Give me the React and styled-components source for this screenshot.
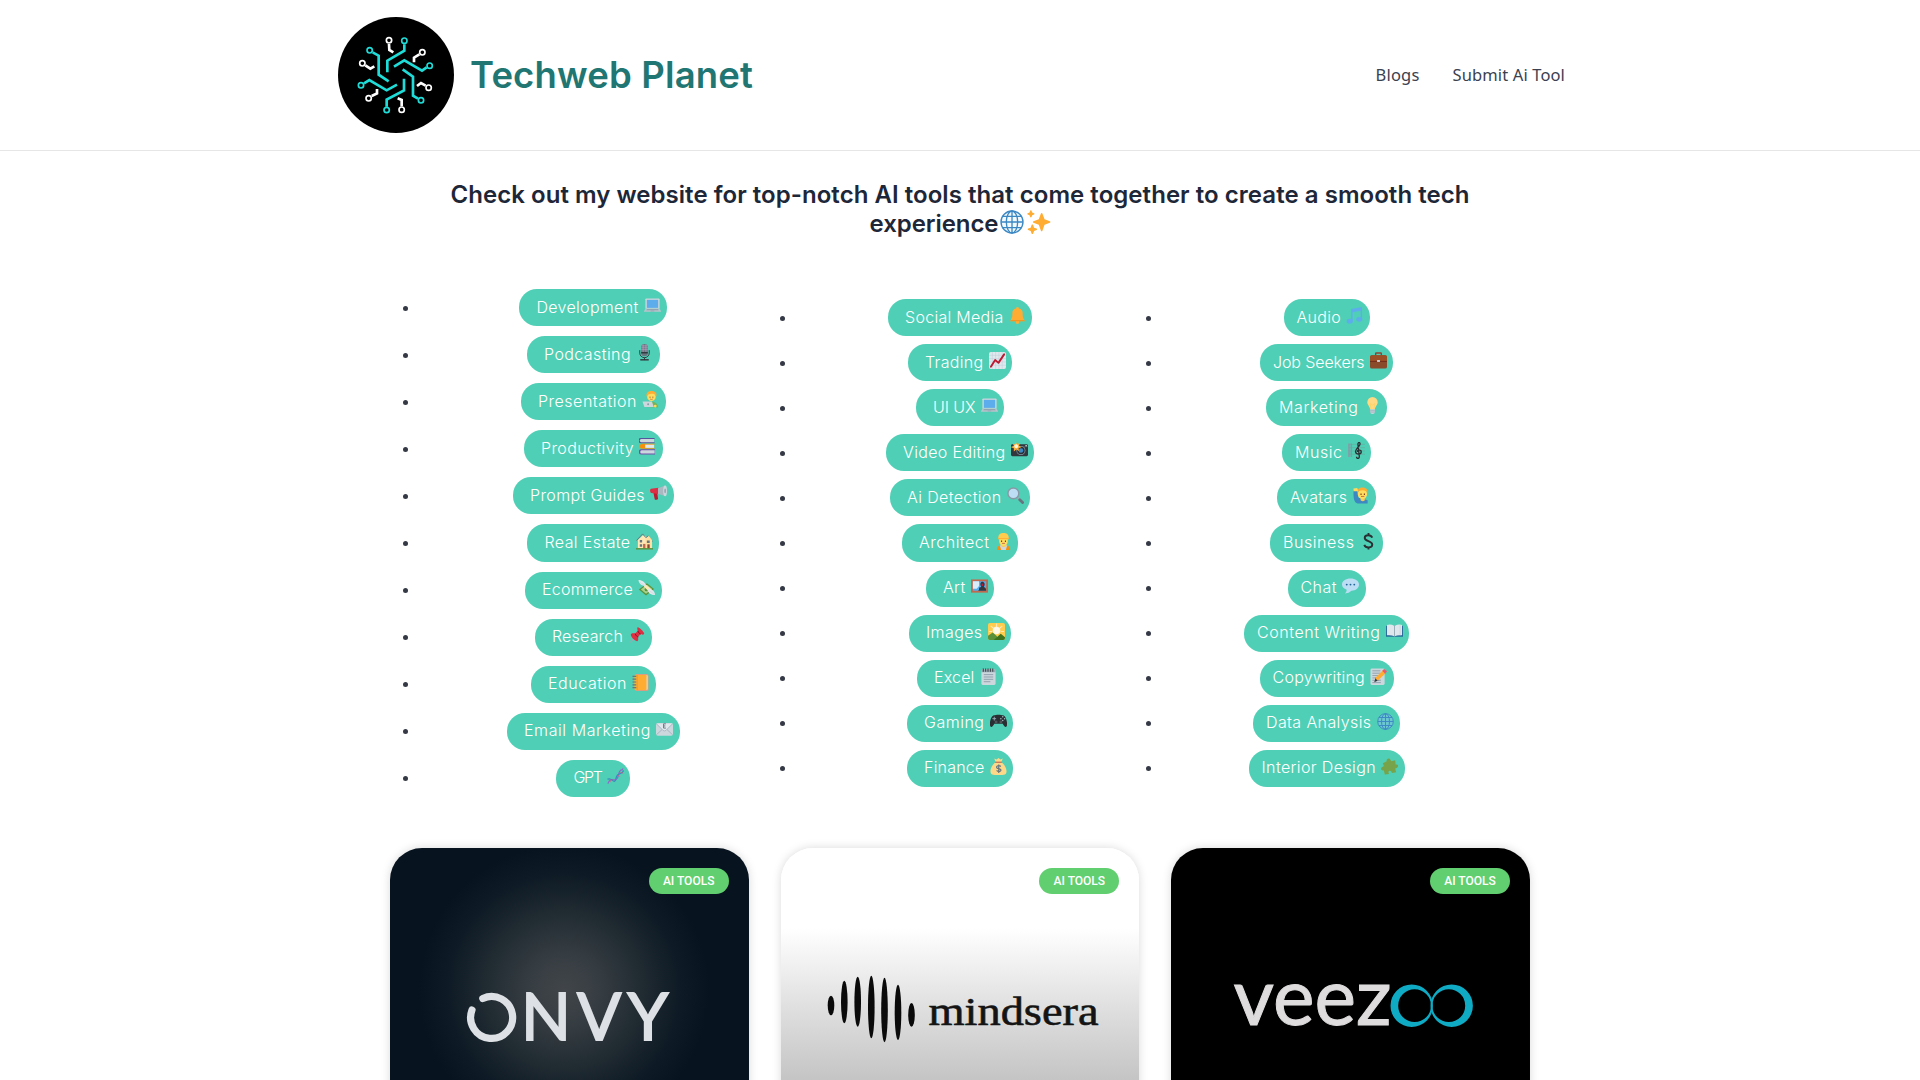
import React, { useLayoutEffect, useRef, useState } from "react";
import styled, { createGlobalStyle } from "styled-components";

const GlobalStyle = createGlobalStyle`
  * { box-sizing: border-box; }
  body { margin: 0; background: #fff; font-family: Inter, "Liberation Sans", sans-serif; overflow: hidden; }
`;

const Page = styled.div`
  height: 1080px;
  overflow: hidden;
  display: flex;
  flex-direction: column;
  background: #fff;
`;

const Header = styled.header`
  flex: none;
  height: 151px;
  border-bottom: 1px solid #e6e6e6;
  display: flex;
  justify-content: center;
`;

const HeaderInner = styled.div`
  width: 1244px;
  display: flex;
  align-items: center;
  justify-content: space-between;
  padding-right: 17px;
`;

const Brand = styled.a`
  display: flex;
  align-items: center;
  gap: 16px;
`;

const BrandMark = styled.svg`
  width: 116px;
  height: 116px;
  display: block;
`;

const BrandName = styled.span`
  font-size: 36.5px;
  font-weight: 600;
  line-height: 44px;
  color: #1f7672;
`;

const Nav = styled.nav`
  display: flex;
  gap: 33px;
`;

const NavLink = styled.a`
  font-family: "Noto Sans", "Open Sans", sans-serif;
  font-size: 16.5px;
  line-height: 24px;
  color: #3a4150;
`;

const Heading = styled.h2`
  flex: none;
  margin: 29px 0 0;
  display: flex;
  flex-direction: column;
  align-items: center;
  font-size: 24px;
  font-weight: 600;
  line-height: 29px;
  color: #1e2738;
`;

const HeadingLine = styled.div`
  display: flex;
  height: 29px;
  align-items: center;
`;

const HeadingIcons = styled.span`
  display: flex;
  gap: 3px;
  margin-left: 1px;
  padding-bottom: 3px;
`;

const Columns = styled.div`
  flex: none;
  height: 508px;
  margin: 51px 0 0 403px;
  display: grid;
  grid-template-columns: 377px 366px 356px;
  align-items: center;
`;

const List = styled.ul`
  list-style: none;
  margin: 0;
  padding: 0;
  width: ${(p) => p.$width}px;
  display: flex;
  flex-direction: column;
  gap: ${(p) => p.$gap}px;
`;

const Item = styled.li`
  display: flex;
  align-items: center;
`;

const Bullet = styled.span`
  flex: none;
  width: 5px;
  height: 5px;
  margin-top: 1px;
  border-radius: 50%;
  background: #343945;
`;

const Slot = styled.div`
  flex: 1;
  display: flex;
  justify-content: center;
`;

const Pill = styled.a`
  width: ${(p) => p.$width}px;
  height: 37.1px;
  padding: 0 6.5px 0 ${(p) => p.$indent}px;
  border-radius: 18px;
  background: #4fcfb5;
  color: #fff;
  display: flex;
  align-items: center;
  justify-content: space-between;
  font-size: 16px;
  font-weight: 300;
  line-height: 27px;
`;

const Label = styled.span`
  white-space: nowrap;
  margin-bottom: 1px;
`;

const Emoji = styled.svg`
  flex: none;
  display: block;
  width: ${(p) => p.$size || 17}px;
  height: ${(p) => p.$size || 17}px;
  margin-bottom: ${(p) => (p.$size ? 0 : 4)}px;
`;

const Cards = styled.div`
  flex: none;
  width: 1140px;
  margin: 51px auto 0;
  display: grid;
  grid-template-columns: repeat(3, 1fr);
  gap: 32px;
`;

const Card = styled.article`
  position: relative;
  height: 520px;
  border-radius: 32px;
  overflow: hidden;
  background: #fff;
  box-shadow: 0 0 10px rgba(0, 0, 0, 0.15);
`;

const Badge = styled.span`
  position: absolute;
  top: 20px;
  right: 20px;
  width: 80px;
  height: 26px;
  border-radius: 13px;
  background: #61ce70;
  color: #fff;
  font-family: Roboto, sans-serif;
  font-size: 12px;
  font-weight: 500;
  line-height: 26px;
  text-align: center;
`;

const Art = styled.svg`
  display: block;
  width: 100%;
  height: 520px;
`;

/* Spreads the letters of a text over a given width. */
function Fit({ as: Tag = Label, width, children }) {
  const ref = useRef(null);
  const [spacing, setSpacing] = useState(0);
  useLayoutEffect(() => {
    const natural = ref.current.getBoundingClientRect().width;
    setSpacing((width - natural) / children.length);
  }, [width, children]);
  return (
    <Tag ref={ref} style={{ letterSpacing: `${spacing}px`, whiteSpace: "nowrap" }}>
      {children}
    </Tag>
  );
}

const globe = (
  <g fill="none" stroke="#3b88c3" strokeWidth="2">
    <circle cx="18" cy="18" r="16.5" fill="#d5ecfa" fillOpacity=".25" />
    <ellipse cx="18" cy="18" rx="8.5" ry="16.5" />
    <path d="M18 1v34M1.5 18h33M4 9.5h28M4 26.5h28" />
  </g>
);

const icons = {
  globe,
  globeSolid: <g><circle cx="18" cy="18" r="16" fill="#3b94d9" fillOpacity=".35" />{globe}</g>,
  sparkles: (
    <g fill="#ffac33">
      <path d="M34.3 16.9l-8-3-3.2-8.7c-.4-1-1.8-1-2.2 0l-3.2 8.7-8 3c-1 .4-1 1.8 0 2.2l8 3 3.2 8.9c.4 1 1.8 1 2.2 0l3.2-8.9 8-3c1-.4 1-1.8 0-2.2z" />
      <path d="M14.3 27.9l-3.7-1.4L9.2 22.500c-.4-1-1.900-1-2.300 0L5.500 26.500l-3.700 1.400c-1 .4-1 1.800 0 2.200l3.700 1.400 1.400 3.900c.4 1 1.900 1 2.300 0l1.400-3.900 3.700-1.400c1-.4 1-1.800 0-2.200zM10.500 4.800L7.800 3.800 6.800 1.100c-.3-.9-1.700-.9-2 0l-1 2.700-2.700 1c-.9.300-.9 1.700 0 2l2.700 1 1 2.700c.3.900 1.700.900 2 0l1-2.700 2.700-1c.9-.3.9-1.700 0-2z" />
    </g>
  ),
  laptop: (
    <g>
      <path d="M5 3h26a2 2 0 0 1 2 2v20H3V5a2 2 0 0 1 2-2z" fill="#ccd6dd" />
      <path d="M6 6h24v17H6z" fill="#5dadec" />
      <path d="M3 25h30l3 5v1H0v-1z" fill="#b8c5cd" />
      <path d="M6 26h24l1 2H5zM14 29h8v1h-8z" fill="#8899a6" />
    </g>
  ),
  mic: (
    <g>
      <path d="M8 13v6a10 10 0 0 0 20 0v-6M18 29v5" fill="none" stroke="#31373d" strokeWidth="2" />
      <rect x="11" y="0" width="14" height="26" rx="7" fill="#66757f" />
      <path d="M12 4h12M11 8h14M11 12h14M15 1v16M21 1v16" stroke="#bb9abf" strokeWidth="1.500" />
      <path d="M11 17h14v3H11z" fill="#31373d" />
      <path d="M9 32h18v3H9z" fill="#31373d" />
    </g>
  ),
  technologist: (
    <g>
      <path d="M9 34c0-8 4-11 11-11s13 3 14 12z" fill="#77b255" />
      <circle cx="20" cy="12" r="9" fill="#ffdc5d" />
      <path d="M10 12C8 3 14 0 20 0s13 3 10 12c-1-5-5-6-10-6s-9 2-10 6z" fill="#ffac33" />
      <path d="M16 12h2v2h-2zM22 12h2v2h-2z" fill="#662113" />
      <path d="M17 17q3 2 6 0" stroke="#c1694f" strokeWidth="1.500" fill="none" />
      <path d="M1 22h20l4 12H5z" fill="#ccd6dd" />
      <circle cx="13" cy="28" r="2" fill="#8899a6" />
      <circle cx="28" cy="32" r="3" fill="#ffdc5d" />
    </g>
  ),
  books: (
    <g>
      <path d="M4 0h29v2H32v7h1v2H4a5.500 5.500 0 0 1 0-11z" fill="#55559d" />
      <path d="M5 2h27v7H5a3.500 3.500 0 0 1 0-7z" fill="#ccd6dd" />
      <path d="M7 12h26v2h-1v7h1v2H7a5.500 5.500 0 0 1 0-11z" fill="#f4900c" />
      <path d="M13 14h19v7H13z" fill="#e1e8ed" />
      <path d="M5 24h29v2h-1v7h1v2H5a5.500 5.500 0 0 1 0-11z" fill="#744eaa" />
      <path d="M6 26h27v7H6a3.500 3.500 0 0 1 0-7z" fill="#ccd6dd" />
    </g>
  ),
  megaphone: (
    <g>
      <path d="M7 15l8-1 2 15c0 2-7 3-7 1z" fill="#be1931" />
      <path d="M2 8l16-2v13L3 17c-3 0-4-8-1-9z" fill="#dd2e44" />
      <path d="M17 7L32 1l2 23-17-5z" fill="#aab8c2" />
      <ellipse cx="32" cy="12.500" rx="4" ry="11.500" fill="#ccd6dd" />
      <ellipse cx="32" cy="12.500" rx="1.500" ry="5" fill="#8899a6" />
    </g>
  ),
  house: (
    <g>
      <path d="M4 15L15 4l17 10v18H4z" fill="#ffe8b6" />
      <path d="M1 16L14 2l7 8 5-4 9 12" fill="none" stroke="#66757f" strokeWidth="2" />
      <path d="M20 13l7-7 7 9v18H20z" fill="#ffe0a0" />
      <path d="M8 15h5v5H8zM23 16h6v5h-6zM8 24h5v5H8z" fill="#66757f" />
      <path d="M15 23h5v10h-5z" fill="#c1694f" />
      <path d="M24 24h5v9h-5z" fill="#8a4633" />
      <path d="M0 32h36v3H0z" fill="#5c913b" />
    </g>
  ),
  moneyWings: (
    <g>
      <path d="M2 20l17-13 15 12-17 14z" fill="#5c913b" />
      <path d="M6 20L19 10l11 9-13 10z" fill="#a7d28b" />
      <circle cx="18" cy="20" r="4" fill="#5c913b" />
      <path d="M12 14l5-4 14 12-5 5z" fill="#ffe8b6" />
      <path d="M1 0c5 0 14 3 17 13-9 0-16-4-17-13zM20 19c9-1 16 4 16 13-8 0-15-4-16-13z" fill="#e1e8ed" />
      <path d="M2 4l10 6M25 23l9 7" stroke="#ccd6dd" strokeWidth="1.500" />
    </g>
  ),
  pin: (
    <g>
      <path d="M11 23L2 35l13-9z" fill="#99aab5" />
      <path d="M20 1c2-2 16 11 14 14-2 2-5 1-7 0l-6 6c1 5 1 8-2 9C14 30 5 20 6 16c1-3 5-3 9-2l6-6c-1-2-2-5-1-7z" fill="#dd2e44" />
      <path d="M15 14c2 5 5 7 7 7M21 8c1 4 3 6 6 7" stroke="#a0041e" strokeWidth="2" fill="none" />
    </g>
  ),
  notebook: (
    <g>
      <path d="M7 0h24a4 4 0 0 1 4 4v29a3 3 0 0 1-3 3H7z" fill="#d99e82" />
      <path d="M7 3h26v30H7z" fill="#e1e8ed" />
      <rect x="5" y="2" width="26" height="32" rx="3" fill="#ffac33" />
      <path d="M11 2v32" stroke="#f4900c" strokeWidth="1.500" />
      <path d="M1 5h8M1 11h8M1 17h8M1 23h8M1 29h8" stroke="#66757f" strokeWidth="2.500" />
    </g>
  ),
  email: (
    <g>
      <rect x="0" y="4" width="36" height="27" rx="4" fill="#ccd6dd" />
      <path d="M1 29l13-12M35 29L22 17" stroke="#99aab5" strokeWidth="1.500" />
      <path d="M1 6l14 14q3 2 6 0L35 6" fill="#e1e8ed" stroke="#99aab5" strokeWidth="1.500" />
      <path d="M21 6h-5v9h5M16 10.500h4" stroke="#66757f" strokeWidth="2" fill="none" />
    </g>
  ),
  dna: (
    <g fill="none" strokeWidth="2.600">
      <path d="M2 33C8 15 20 35 24 16S31 10 34 1" stroke="#9266cc" />
      <path d="M1 24c9-6 15 14 18-2S32 17 35 5" stroke="#3b88c3" />
      <path d="M6 23l1 7M13 24l1 5M22 15l6 3M28 9l6 2" stroke="#ea596e" strokeWidth="1.500" />
    </g>
  ),
  bell: (
    <g fill="#ffac33">
      <path d="M18 0a3 3 0 0 1 3 3c6 1 8 5 8 10v5c0 6 4 8 4 12H3c0-4 4-6 4-12v-5C7 8 9 4 15 3a3 3 0 0 1 3-3z" />
      <circle cx="18" cy="32" r="4" />
      <path d="M3 28h30v2H3z" fill="#f19020" />
    </g>
  ),
  chart: (
    <g>
      <rect width="36" height="36" rx="4" fill="#e1e8ed" />
      <path d="M7 0v36M14 0v36M21 0v36M28 0v36M0 7h36M0 14h36M0 21h36M0 28h36" stroke="#b8cbd6" strokeWidth="1" />
      <path d="M4 31l9-14 7 6L32 5" fill="none" stroke="#be1931" strokeWidth="4" strokeLinecap="round" strokeLinejoin="round" />
    </g>
  ),
  camera: (
    <g>
      <rect x="0" y="5" width="36" height="25" rx="3" fill="#31373d" />
      <path d="M0 9h36v2H0z" fill="#50575c" />
      <circle cx="21" cy="18" r="9.500" fill="#8899a6" />
      <circle cx="21" cy="18" r="8" fill="#292f33" />
      <circle cx="21" cy="18" r="5" fill="#3b88c3" />
      <path d="M10 0l3 5 6-3-2 6 5 3-6 2 1 6-6-3-5 4 0-7-6-2 6-3-2-5 5 2z" fill="#ffac33" />
      <circle cx="11" cy="9" r="4" fill="#fff8e8" />
      <circle cx="32" cy="8" r="1.500" fill="#fff" />
    </g>
  ),
  magnifier: (
    <g>
      <path d="M22 22l4 4" stroke="#9aaab4" strokeWidth="4" />
      <path d="M27 27l6 6" stroke="#66757f" strokeWidth="6" strokeLinecap="round" />
      <circle cx="13.500" cy="13.500" r="11.500" fill="#bdddf4" stroke="#8899a6" strokeWidth="3" />
    </g>
  ),
  worker: (
    <g>
      <path d="M4 36c0-8 5-11 14-11s14 3 14 11z" fill="#f4900c" />
      <path d="M10 26l3 10h10l3-10z" fill="#ccd6dd" />
      <path d="M13 22h10v5q-5 6-10 0z" fill="#f9ca55" />
      <path d="M9 12h18v6c0 6-4 9-9 9s-9-3-9-9z" fill="#ffdc5d" />
      <path d="M7 10C7 3 12 0 18 0s11 3 11 10v3H7z" fill="#ffcc4d" />
      <path d="M6 11h24v2H6z" fill="#ffac33" />
      <path d="M13 16h2v3h-2zM21 16h2v3h-2z" fill="#662113" />
      <path d="M15 22h6" stroke="#c1694f" strokeWidth="2" />
    </g>
  ),
  frame: (
    <g>
      <path d="M0 3h36v28H0z" fill="#c1694f" />
      <path d="M4 7h28v20H4z" fill="#55acee" />
      <path d="M4 7h13v10l-5 6H4z" fill="#d8edf9" />
      <path d="M17 25c0-7 2-5 5-6-4-6-2-11 2-11s7 5 3 11c4 1 5 3 5 8H15z" fill="#31373d" />
      <path d="M22 12h4v5h-4z" fill="#be1931" />
    </g>
  ),
  sunrise: (
    <g>
      <rect width="36" height="36" rx="4" fill="#ffcc4d" />
      <path d="M18 1v8M6 6l6 6M30 6l-6 6M2 18h7M34 18h-7" stroke="#ffe8b6" strokeWidth="2.500" />
      <circle cx="18" cy="16" r="8" fill="#fff8e8" />
      <path d="M0 33V27l10-7 9 8v8H4a4 4 0 0 1-4-3z" fill="#5c913b" />
      <path d="M12 36l15-13 9 7v2a4 4 0 0 1-4 4z" fill="#3e721d" />
    </g>
  ),
  notepad: (
    <g>
      <rect x="3" y="3" width="30" height="33" rx="3" fill="#ccd6dd" />
      <path d="M3 3h30v6H3z" fill="#99aab5" />
      <path d="M7 1v7M12 1v7M17 1v7M22 1v7M27 1v7" stroke="#31373d" strokeWidth="2" />
      <path d="M8 14h20M8 19h20M8 24h20M8 29h14" stroke="#8899a6" strokeWidth="1.800" />
    </g>
  ),
  gamepad: (
    <g>
      <path d="M8 5c5-2 15-2 20 0 6 2 9 15 8 21-1 6-6 4-9-3H9c-3 7-8 9-9 3C-1 20 2 7 8 5z" fill="#292f33" />
      <path d="M9 8v8M5 12h8" stroke="#99aab5" strokeWidth="2" />
      <g fill="#aab8c2"><circle cx="27" cy="8" r="1.600" /><circle cx="31" cy="12" r="1.600" /><circle cx="23" cy="12" r="1.600" /><circle cx="27" cy="16" r="1.600" /></g>
      <circle cx="13" cy="19" r="3" fill="#50575c" /><circle cx="23" cy="19" r="3" fill="#50575c" />
    </g>
  ),
  moneybag: (
    <g>
      <path d="M12 9L9 1l5 2 4-3 4 3 5-2-3 8c6 4 11 12 11 19s-4 8-17 8S1 35 1 28 6 13 12 9z" fill="#fdd888" />
      <path d="M11 9h14" stroke="#bf6952" strokeWidth="2.500" />
      <path d="M23 18c-3-3-10-2-9 2 1 3 8 2 9 5 1 4-6 5-9 1M18.500 14v18" stroke="#67757f" strokeWidth="2.500" fill="none" />
    </g>
  ),
  notes: (
    <g fill="#5dadec">
      <path d="M11 4L34 0v25h-3V8L14 11v19h-3z" />
      <ellipse cx="8" cy="30" rx="6.500" ry="5" /><ellipse cx="28" cy="26" rx="6.500" ry="5" />
    </g>
  ),
  briefcase: (
    <g>
      <path d="M12 8V3q0-1 1-1h10q1 0 1 1v5" fill="none" stroke="#8a4633" strokeWidth="3" />
      <rect x="0" y="7" width="36" height="28" rx="4" fill="#8a4b2a" />
      <path d="M0 11a4 4 0 0 1 4-4h28a4 4 0 0 1 4 4v9H0z" fill="#9c4f25" />
      <path d="M0 20h36" stroke="#662113" strokeWidth="1.500" />
      <path d="M15 17h6v4h-6z" fill="#ccd6dd" />
    </g>
  ),
  bulb: (
    <g>
      <path d="M29 11c0 6-5 8-6 15H13C12 19 7 17 7 11a11 11 0 0 1 22 0z" fill="#ffd983" />
      <path d="M15 26l-2-12 5 3 5-3-2 12" fill="none" stroke="#ffcc4d" strokeWidth="1" />
      <path d="M13 26h10v6q0 4-5 4t-5-4z" fill="#ccd6dd" />
      <path d="M13 29h10M13 32h10" stroke="#99aab5" strokeWidth="1.500" />
    </g>
  ),
  score: (
    <g>
      <path d="M2 3v29M7 3v29" stroke="#8899a6" strokeWidth="3" />
      <path d="M2 5h34M2 12h34M2 19h34M2 26h34" stroke="#67a99e" strokeWidth="1.300" />
      <path d="M18 31c0 5 6 5 6 0L21 5c0-6 6-5 4 1-2 5-10 9-9 15 1 6 12 6 12 0 0-5-8-5-8 0" fill="none" stroke="#292f33" strokeWidth="2.800" />
    </g>
  ),
  raisingHand: (
    <g>
      <path d="M1 7h8l2 15 20 6v7H10C2 33 1 25 1 7z" fill="#3b88c3" />
      <path d="M16 21h9v7q-4 4-9 0z" fill="#f9ca55" />
      <circle cx="20" cy="15" r="10" fill="#ffdc5d" />
      <path d="M10 13C8 4 14 1 20 1s13 3 10 12c-1-4-4-6-10-6s-9 2-10 6z" fill="#ffac33" />
      <path d="M1 3l8-1 2 7H1z" fill="#ffdc5d" />
      <path d="M16 14h2v3h-2zM23 14h2v3h-2z" fill="#662113" />
      <path d="M17 20h7" stroke="#c1694f" strokeWidth="2" />
    </g>
  ),
  dollar: <path d="M26 10C23 3 10 3 10 10.500s16 6 16 14-14 8-17 .5M18 0v6M18 29v6" fill="none" stroke="#292f33" strokeWidth="4" />,
  speech: (
    <g>
      <path d="M18 1c10 0 18 5 18 13s-7 13-16 13q-5 5-14 6 4-3 4-8C4 23 0 19 0 14 0 6 8 1 18 1z" fill="#bdddf4" />
      <g fill="#226699"><circle cx="10" cy="14" r="2" /><circle cx="18" cy="14" r="2" /><circle cx="26" cy="14" r="2" /></g>
    </g>
  ),
  openBook: (
    <g>
      <path d="M0 6h36v23H0z" fill="#226699" />
      <path d="M2 4q9-2 15 2h2q6-4 15-2v22q-9-1-16 2-7-3-16-2z" fill="#e1e8ed" />
      <path d="M18 6v22" stroke="#99aab5" strokeWidth="2" />
      <path d="M30 4v22" stroke="#ccd6dd" strokeWidth="2" />
    </g>
  ),
  memo: (
    <g>
      <rect x="1" y="1" width="30" height="35" rx="3" fill="#ccd6dd" />
      <path d="M5 6h17M5 11h17M5 16h13M5 21h10M5 26h18M5 31h18" stroke="#8899a6" strokeWidth="1.800" />
      <path d="M9 30l3-10 6 6z" fill="#31373d" />
      <path d="M11 21L28 4l6 6-18 17z" fill="#ffac33" />
      <path d="M26 6l4-4 6 5-4 5z" fill="#ea596e" />
    </g>
  ),
  puzzle: (
    <path d="M4 11l8-4c-1-6 6-8 8-3l2 3 8-2 1 9c6-2 7 5 2 7l-3 1 2 8-9 2c0-6-8-7-7-1l1 3-9 1-2-9c-6 2-8-5-3-7l3-2z" fill="#77a34b" />
  ),
};

function Icon({ name, size }) {
  return (
    <Emoji viewBox="0 0 36 36" $size={size} aria-hidden="true">
      {icons[name]}
    </Emoji>
  );
}

const columns = [
  {
    width: 375, gap: 10, indent: 17.5,
    items: [
      ["Development", 148, "laptop"], ["Podcasting", 133, "mic"], ["Presentation", 145, "technologist"],
      ["Productivity", 139, "books"], ["Prompt Guides", 161, "megaphone"], ["Real Estate", 132, "house"],
      ["Ecommerce", 137, "moneyWings"], ["Research", 117, "pin"], ["Education", 125, "notebook"],
      ["Email Marketing", 173, "email"], ["GPT", 74, "dna"],
    ],
  },
  {
    width: 355, gap: 8, indent: 17,
    items: [
      ["Social Media", 144, "bell"], ["Trading", 104, "chart"], ["UI UX", 88, "laptop"],
      ["Video Editing", 148, "camera"], ["Ai Detection", 140, "magnifier"], ["Architect", 116, "worker"],
      ["Art", 68, "frame"], ["Images", 102, "sunrise"], ["Excel", 86, "notepad"],
      ["Gaming", 106, "gamepad"], ["Finance", 106, "moneybag"],
    ],
  },
  {
    width: 356, gap: 8, indent: 13,
    items: [
      ["Audio", 86, "notes"], ["Job Seekers", 133, "briefcase"], ["Marketing", 121, "bulb"],
      ["Music", 89, "score"], ["Avatars", 99, "raisingHand"], ["Business", 113, "dollar"],
      ["Chat", 78, "speech"], ["Content Writing", 165, "openBook"], ["Copywriting", 134, "memo"],
      ["Data Analysis", 147, "globeSolid"], ["Interior Design", 156, "puzzle"],
    ],
  },
];

const circuit = [
  ["#1fdcd8", 223, 122, "M223 133V152L172 182V217"],
  ["#1fdcd8", 119, 151, "M128 157L146 167V224L176 244"],
  ["#1fdcd8", 93, 256, "M102 250L118 240L170 271L201 254"],
  ["#1fdcd8", 170, 330, "M170 320V299L222 271V236"],
  ["#1fdcd8", 273, 301, "M264 296L249 287V230L218 208"],
  ["#1fdcd8", 299, 197, "M290 202L276 212L223 181L192 200"],
  ["#fff", 177, 121, "M177 132L178 150L190 157"],
  ["#fff", 277, 157, "M268 163L252 173V187"],
  ["#fff", 97, 190, "M106 196L121 206L133 199"],
  ["#fff", 116, 295, "M125 288L141 280V267"],
  ["#fff", 215, 329, "M215 319V300L203 295"],
  ["#fff", 296, 263, "M287 257L273 249L261 258"],
];

const bars = [
  [50, 147.7, 167.3], [63.3, 132.7, 175.3], [76.7, 128.7, 178.7], [90.3, 127.7, 190.3],
  [103.5, 129.7, 194.3], [117, 136.7, 192], [130.5, 155, 178.7],
];

function Onvy() {
  return (
    <Art viewBox="0 0 358.667 520">
      <defs>
        <radialGradient id="glow" gradientUnits="userSpaceOnUse" cx="174" cy="142" r="145">
          <stop offset="0" stopColor="#414549" />
          <stop offset=".25" stopColor="#363d42" />
          <stop offset=".55" stopColor="#1f2a31" />
          <stop offset=".8" stopColor="#0e1a25" />
          <stop offset="1" stopColor="#07131e" />
        </radialGradient>
      </defs>
      <rect width="359" height="520" fill="url(#glow)" />
      <path d="M92.8 150.4A21 21 0 1 1 82 162" fill="none" stroke="#dde1e5" strokeWidth="7.200" strokeLinecap="round" />
      <g fill="#dde1e5" fontFamily="Lato, sans-serif" fontSize="65.500" fontWeight="400" stroke="#dde1e5" strokeWidth="1.800">
        <text x="131" y="192">N</text>
        <text x="187" y="192">V</text>
        <text x="237.500" y="192">Y</text>
      </g>
    </Art>
  );
}

function Mindsera() {
  return (
    <Art viewBox="0 0 358.667 520">
      <defs>
        <linearGradient id="fade" gradientUnits="userSpaceOnUse" x1="0" y1="80" x2="0" y2="236">
          <stop offset="0" stopColor="#fff" />
          <stop offset=".5" stopColor="#e0e0e0" />
          <stop offset="1" stopColor="#c3c3c3" />
        </linearGradient>
      </defs>
      <rect width="359" height="520" fill="url(#fade)" />
      <g fill="#0a0a0a">
        {bars.map(([x, top, bottom]) => (
          <ellipse key={x} cx={x} cy={(top + bottom) / 2} rx="3.300" ry={(bottom - top) / 2} />
        ))}
      </g>
      <text x="147.500" y="177" textLength="170" lengthAdjust="spacingAndGlyphs" fill="#141414" stroke="#141414" strokeWidth=".6" fontFamily="'Liberation Serif', serif" fontSize="40">mindsera</text>
    </Art>
  );
}

function Veezoo() {
  return (
    <Art viewBox="0 0 358.667 520">
      <rect width="359" height="520" fill="#000" />
      <text x="62.500" y="177.500" textLength="158" lengthAdjust="spacingAndGlyphs" fill="#dedcdc" stroke="#dedcdc" strokeWidth="1" fontFamily="Lato, sans-serif" fontSize="80">veez</text>
      <path
        fill="#0fabc5"
        fillRule="evenodd"
        d="M219.500 157.700a21.200 21.200 0 1 0 42.400 0a21.200 21.200 0 1 0-42.400 0zM227.200 157.700a16.400 16.400 0 1 1 32.800 0a16.400 16.400 0 1 1-32.800 0z"
      />
      <path
        fill="#0fabc5"
        fillRule="evenodd"
        d="M259.500 157.700a21.200 21.200 0 1 0 42.400 0a21.200 21.200 0 1 0-42.400 0zM261.400 157.700a16.400 16.400 0 1 1 32.800 0a16.400 16.400 0 1 1-32.800 0z"
      />
    </Art>
  );
}

export default function App() {
  return (
    <Page>
      <GlobalStyle />
      <Header>
        <HeaderInner>
          <Brand>
            <BrandMark viewBox="24 51 348 348">
              <circle cx="198" cy="225" r="174" fill="#000" />
              {circuit.map(([color, x, y, d]) => (
                <g key={d} fill="none" stroke={color}>
                  <circle cx={x} cy={y} r="8" strokeWidth="5" />
                  <path d={d} strokeWidth="8" />
                </g>
              ))}
            </BrandMark>
            <Fit as={BrandName} width={283}>Techweb Planet</Fit>
          </Brand>
          <Nav>
            <Fit as={NavLink} width={44}>Blogs</Fit>
            <Fit as={NavLink} width={112.5}>Submit Ai Tool</Fit>
          </Nav>
        </HeaderInner>
      </Header>
      <Heading>
        <HeadingLine>
          <Fit width={1019}>Check out my website for top-notch AI tools that come together to create a smooth tech</Fit>
        </HeadingLine>
        <HeadingLine>
          <Fit width={129}>experience</Fit>
          <HeadingIcons>
            <Icon name="globe" size={24} />
            <Icon name="sparkles" size={24} />
          </HeadingIcons>
        </HeadingLine>
      </Heading>
      <Columns>
        {columns.map((col) => (
          <List key={col.width} $width={col.width} $gap={col.gap}>
            {col.items.map(([label, width, icon]) => (
              <Item key={label}>
                <Bullet />
                <Slot>
                  <Pill $width={width} $indent={col.indent}>
                    <Fit width={width - col.indent - 28.5}>{label}</Fit>
                    <Icon name={icon} />
                  </Pill>
                </Slot>
              </Item>
            ))}
          </List>
        ))}
      </Columns>
      <Cards>
        {[Onvy, Mindsera, Veezoo].map((Picture, i) => (
          <Card key={i}>
            <Picture />
            <Badge>AI TOOLS</Badge>
          </Card>
        ))}
      </Cards>
    </Page>
  );
}
